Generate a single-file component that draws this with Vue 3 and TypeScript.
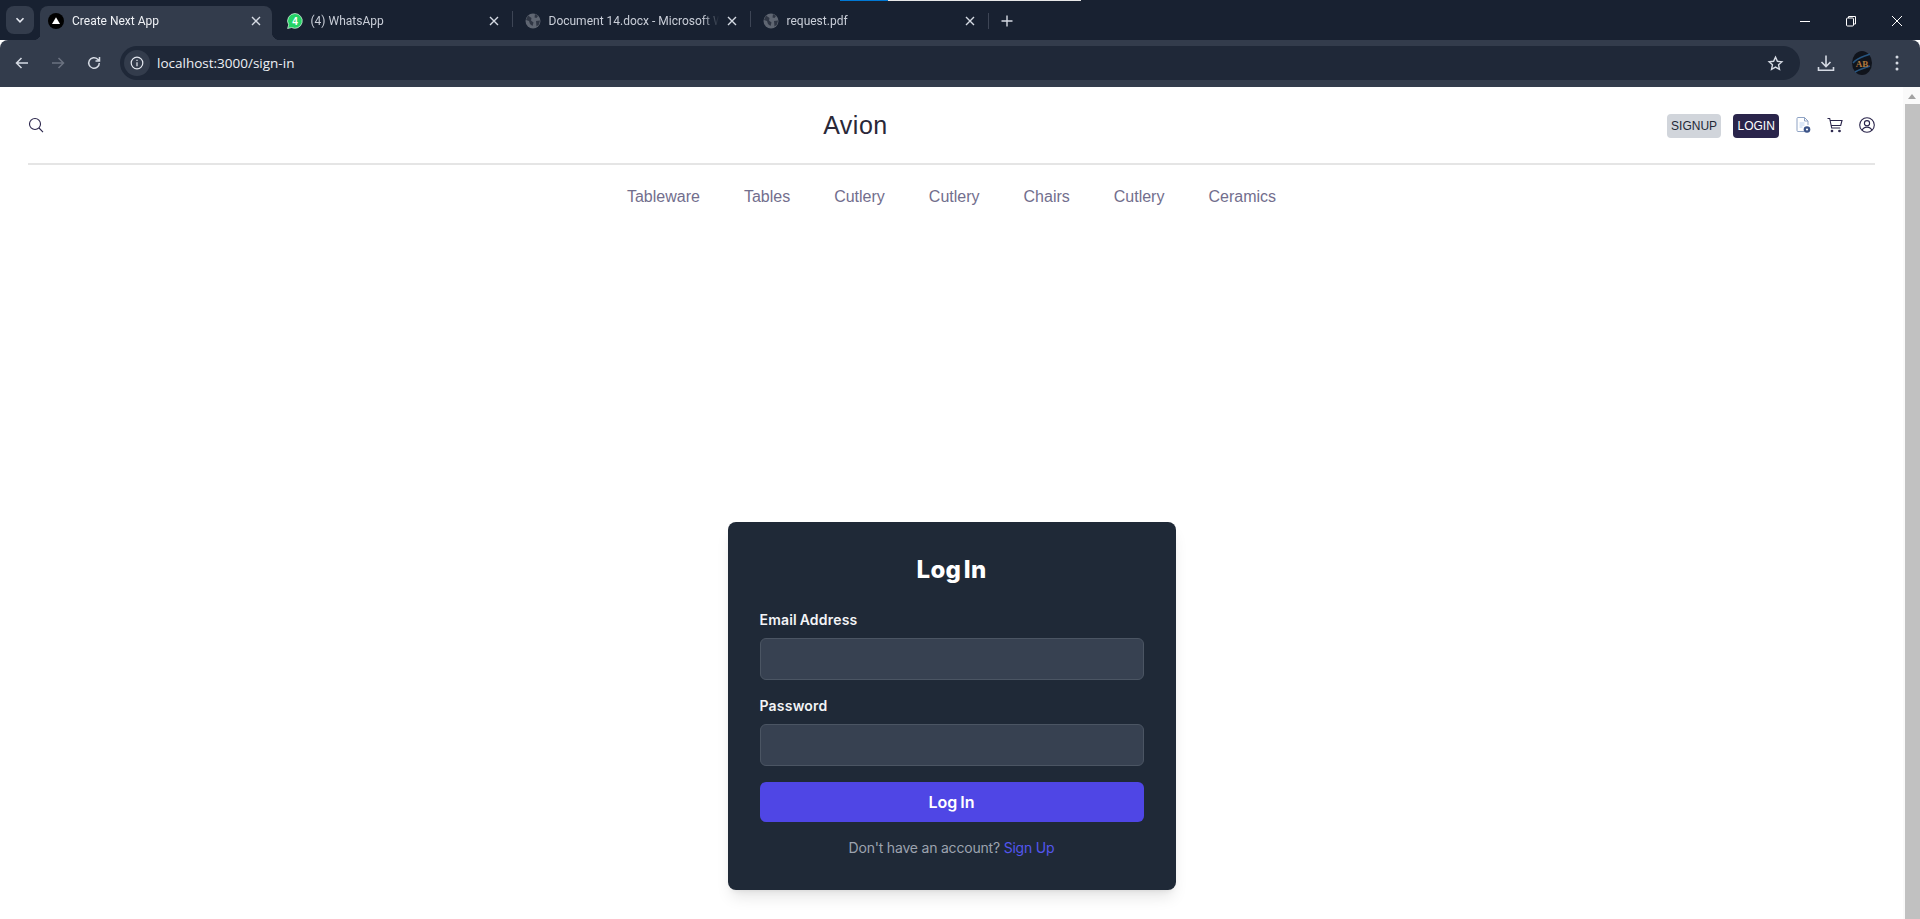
<template>
  <div class="screen">
    <!-- browser frame -->
    <div class="load-line">
      <span class="load-blue"></span>
      <span class="load-white"></span>
    </div>
    <div class="tabstrip">
      <div class="tab-menu">
        <svg width="12" height="12" viewBox="0 0 12 12" fill="none" stroke="#e4e8f0" stroke-width="1.6"><path d="M2.5 4.2 6 7.8l3.5-3.6" /></svg>
      </div>
      <div v-for="(tab, i) in tabs" :key="tab.title" class="tab" :class="{ active: i === 0 }">
        <svg v-if="tab.icon === 'next'" class="favicon" viewBox="0 0 16 16">
          <circle cx="8" cy="8" r="8" fill="#000" />
          <path d="M8 4.2 12 11H4z" fill="#fff" />
        </svg>
        <svg v-else-if="tab.icon === 'wa'" class="favicon" viewBox="0 0 16 16">
          <path d="M8 .5a7.400 7.400 0 0 0-6.300 11.300L.6 15.500l3.900-1A7.400 7.400 0 1 0 8 .5z" fill="#25d366" stroke="#e8f5ec" stroke-width=".7" />
          <text x="8" y="11.600" text-anchor="middle" class="wa-num">4</text>
        </svg>
        <svg v-else class="favicon" viewBox="0 0 16 16">
          <circle cx="8" cy="8" r="7.500" fill="#5f6672" />
          <path d="M3 2.500 6.500 5 6 7.500 8.500 9.500 7.500 13 5 11 4 8 1 7zM10 1l3 2-1.500 2-2-.5zM11 8l4-.5-1 4-2.500 2z" fill="#2f3644" />
        </svg>
        <span class="tab-title">{{ tab.title }}</span>
        <svg class="tab-close" width="10" height="10" viewBox="0 0 10 10" stroke="#d5dae3" stroke-width="1.400"><path d="M1 1l8 8M9 1l-8 8" /></svg>
      </div>
      <div class="new-tab">
        <svg width="12" height="12" viewBox="0 0 12 12" stroke="#d5dae3" stroke-width="1.400"><path d="M6 .5v11M.5 6h11" /></svg>
      </div>
      <div class="win-btns">
        <svg width="12" height="12" viewBox="0 0 12 12" stroke="#fff"><path d="M1 6.500h10" /></svg>
        <svg width="12" height="12" viewBox="0 0 12 12" stroke="#fff" fill="none"><rect x="1.500" y="3" width="7" height="8" rx="1" /><path d="M3.500 3V1.500h7v7.500H8.500" /></svg>
        <svg width="12" height="12" viewBox="0 0 12 12" stroke="#fff"><path d="M1 1l10 10M11 1 1 11" /></svg>
      </div>
    </div>
    <div class="toolbar">
      <svg class="nav-btn" viewBox="0 0 16 16" fill="none" stroke="#d5dae3" stroke-width="1.500"><path d="M14 8H2.500M7.500 3 2.500 8l5 5" /></svg>
      <svg class="nav-btn" viewBox="0 0 16 16" fill="none" stroke="#6b7280" stroke-width="1.500"><path d="M2 8h11.500M8.500 3l5 5-5 5" /></svg>
      <svg class="nav-btn" viewBox="0 0 16 16" fill="none" stroke="#d5dae3" stroke-width="1.500"><path d="M13.300 8a5.300 5.300 0 1 1-1.600-3.800L13.500 6M13.500 2v4h-4" /></svg>
      <div class="omnibox">
        <span class="site-chip">
          <svg width="14" height="14" viewBox="0 0 14 14" fill="none" stroke="#e4e8f0" stroke-width="1.200"><circle cx="7" cy="7" r="5.800" /><path d="M7 6.200v4M7 3.800v1.200" /></svg>
        </span>
        <span class="url">localhost:3000/sign-in</span>
        <svg class="star" width="17" height="17" viewBox="0 0 24 24" fill="none" stroke="#d5dae3" stroke-width="2"><path d="m12 3 2.700 5.900 6.300.7-4.700 4.300 1.300 6.300L12 17.100l-5.600 3.100 1.300-6.300L3 9.600l6.300-.7z" /></svg>
      </div>
      <svg class="download" width="18" height="18" viewBox="0 0 18 18" fill="none" stroke="#d5dae3" stroke-width="1.600"><path d="M9 1.500v10.500M4.500 8 9 12.500 13.500 8M1.500 13v3.200h15V13" /></svg>
      <svg class="avatar" width="20" height="24" viewBox="0 0 20 24">
        <ellipse cx="10" cy="12" rx="10" ry="12" fill="#10141c" />
        <path d="M1 12C6 6 11 6 18 3M3 21c5-3 10-4 15-6" stroke="#27557f" stroke-width="1.500" fill="none" />
        <text x="10" y="16" text-anchor="middle" class="avatar-text">AB</text>
      </svg>
      <svg class="dots" width="4" height="18" viewBox="0 0 4 18" fill="#d5dae3"><circle cx="2" cy="3" r="1.500" /><circle cx="2" cy="9" r="1.500" /><circle cx="2" cy="15" r="1.500" /></svg>
    </div>

    <!-- page -->
    <div class="viewport">
      <div class="page">
        <header class="header">
          <svg class="icon" viewBox="0 0 16 16" fill="none" stroke="#2a254b" stroke-width="1.100"><circle cx="7" cy="7" r="5.500" /><path d="m11 11 4 4.200" /></svg>
          <div class="logo">Avion</div>
          <div class="header-right">
            <button class="btn-signup">SIGNUP</button>
            <button class="btn-login">LOGIN</button>
            <svg class="icon" viewBox="0 0 16 16" fill="none">
              <path d="M9.500 .5 13 4v4M9.500 .5v3.500H13M9.500 .5H3Q2 .5 2 1.500v12q0 1 1 1h6" stroke="#8fa3c4" />
              <path d="M4.500 6h5M4.500 8h5M4.500 10h3" stroke="#b8d0f0" />
              <circle cx="12" cy="12.500" r="3.300" fill="#3c5488" />
              <circle cx="12" cy="12.500" r="1.100" fill="#fff" />
            </svg>
            <svg class="icon" viewBox="0 0 16 16" fill="none" stroke="#2a254b" stroke-width="1.100">
              <path d="M.5 1.500h2.200l2 9.500h8.500M3.200 3.500h11.800l-1.300 5H4.200" />
              <circle cx="5" cy="14" r=".8" fill="#2a254b" />
              <circle cx="12.500" cy="14" r=".8" fill="#2a254b" />
            </svg>
            <svg class="icon" viewBox="0 0 16 16" fill="none" stroke="#2a254b" stroke-width="1.100">
              <circle cx="8" cy="8" r="7.300" />
              <circle cx="8" cy="6.200" r="2.600" />
              <path d="M3.200 13.300c.8-2.200 2.700-3.200 4.800-3.200s4 1 4.800 3.200" />
            </svg>
          </div>
        </header>
        <div class="rule"></div>
        <nav class="nav">
          <a v-for="(link, i) in links" :key="i" class="nav-link">{{ link }}</a>
        </nav>

        <main class="main">
          <form class="card" @submit.prevent>
            <h2 class="card-title">Log In</h2>
            <label class="field-label">Email Address</label>
            <input class="field" type="email" />
            <label class="field-label second">Password</label>
            <input class="field" type="password" />
            <button class="submit" type="submit">Log In</button>
            <p class="foot">Don't have an account? <a class="foot-link">Sign Up</a></p>
          </form>
        </main>
      </div>
      <div class="scrollbar">
        <div class="scroll-arrow"></div>
        <div class="scroll-thumb"></div>
      </div>
    </div>
  </div>
</template>

<script setup lang="ts">
const tabs = [
  { title: 'Create Next App', icon: 'next' },
  { title: '(4) WhatsApp', icon: 'wa' },
  { title: 'Document 14.docx - Microsoft Word Online', icon: 'globe' },
  { title: 'request.pdf', icon: 'globe' }
]
const links = ['Tableware', 'Tables', 'Cutlery', 'Cutlery', 'Chairs', 'Cutlery', 'Ceramics']
</script>

<style scoped>
.screen {
  width: 1920px;
  height: 919px;
  display: flex;
  flex-direction: column;
  overflow: hidden;
  background: #fff;
}
.load-line {
  height: 1px;
  background: #182131;
  display: flex;
  padding-left: 840px;
}
.load-blue {
  width: 48px;
  background: #0078d4;
}
.load-white {
  width: 193px;
  background: #e8e8e8;
}
.tabstrip {
  height: 39px;
  background: #182131;
  display: flex;
  align-items: flex-end;
  font-family: Roboto, sans-serif;
  font-size: 12px;
  padding-left: 6px;
  position: relative;
}
.tab-menu {
  width: 28px;
  height: 28px;
  margin: 0 2px 6px 0;
  background: #333c4c;
  border-radius: 8px;
  display: flex;
  align-items: center;
  justify-content: center;
}
.tab {
  width: 238px;
  height: 34px;
  padding: 0 12px 4px 11.500px;
  box-sizing: border-box;
  display: flex;
  align-items: center;
  color: #c9ced8;
  position: relative;
  border-left: 1px solid transparent;
}
.tab + .tab + .tab::before,
.tab + .tab + .tab + .tab::before {
  content: '';
  position: absolute;
  left: -1px;
  top: 5px;
  height: 16px;
  width: 1px;
  background: #3d4555;
}
.tab.active {
  width: 232px;
  margin: 0 2px 0 4px;
  padding-left: 7px;
  padding-right: 10px;
  background: #333c4c;
  border-radius: 8px 8px 0 0;
  color: #f0f2f6;
}
.tab.active::before,
.tab.active::after {
  content: '';
  position: absolute;
  bottom: 0;
  width: 8px;
  height: 8px;
}
.tab.active::before {
  left: -8px;
  background: radial-gradient(circle at 0 0, transparent 8px, #333c4c 8.500px);
}
.tab.active::after {
  right: -8px;
  background: radial-gradient(circle at 100% 0, transparent 8px, #333c4c 8.500px);
}
.favicon {
  width: 16px;
  height: 16px;
  flex: none;
}
.wa-num {
  font: 700 10px 'Liberation Sans', sans-serif;
  fill: #fff;
}
.avatar-text {
  font: 700 9px 'Liberation Serif', serif;
  fill: #b07a3c;
}
.tab-title {
  flex: 1;
  margin-left: 8px;
  overflow: hidden;
  white-space: nowrap;
  -webkit-mask-image: linear-gradient(90deg, #000 90%, transparent);
  mask-image: linear-gradient(90deg, #000 90%, transparent);
}
.tab-close {
  flex: none;
  margin: 0 1px 0 8px;
}
.new-tab {
  height: 16px;
  margin: 0 0 11px 0;
  padding-left: 12px;
  border-left: 1px solid #3d4555;
  display: flex;
  align-items: center;
}
.win-btns {
  margin-left: auto;
  height: 34px;
  display: flex;
  align-items: center;
  gap: 34px;
  padding: 0 17px 4px 0;
  box-sizing: border-box;
}
.toolbar {
  height: 47px;
  background: #333c4c;
  border-radius: 8px 8px 0 0;
  display: flex;
  align-items: center;
  padding: 0 0 1px 14px;
  box-sizing: border-box;
}
.nav-btn {
  width: 16px;
  height: 16px;
  margin-right: 20px;
  flex: none;
}
.omnibox {
  width: 1680px;
  height: 34px;
  margin-left: -2px;
  background: #1f2838;
  border-radius: 17px;
  display: flex;
  align-items: center;
  padding: 0 16px 0 4px;
  box-sizing: border-box;
  flex: none;
}
.site-chip {
  width: 26px;
  height: 26px;
  border-radius: 50%;
  background: #333c4c;
  display: flex;
  align-items: center;
  justify-content: center;
}
.url {
  margin-left: 7px;
  color: #eef0f4;
  font: 13.500px 'Open Sans', sans-serif;
}
.star {
  margin-left: auto;
}
.download {
  margin-left: 17px;
}
.avatar {
  margin-left: 17px;
}
.dots {
  margin-left: 23px;
}
.viewport {
  flex: 1;
  display: flex;
  min-height: 0;
}
.page {
  flex: 1;
  min-width: 0;
  font-family: 'Liberation Sans', sans-serif;
}
.header {
  height: 76px;
  padding: 0 28px;
  display: flex;
  align-items: center;
  justify-content: space-between;
}
.icon {
  width: 16px;
  height: 16px;
  flex: none;
}
.logo {
  font-size: 25px;
  letter-spacing: 0.5px;
  color: #2a2838;
}
.header-right {
  display: flex;
  align-items: center;
  gap: 16px;
}
.btn-signup,
.btn-login {
  height: 24px;
  margin-top: 2px;
  border: 0;
  border-radius: 4px;
  padding: 0 4.200px;
  font: 12px 'Liberation Sans', sans-serif;
}
.btn-signup {
  background: #d1d5db;
  color: #1f2937;
  margin-right: -4px;
}
.btn-login {
  background: #2a254b;
  color: #fff;
}
.rule {
  height: 2px;
  margin: 0 28px;
  background: #e5e5e5;
}
.nav {
  height: 64px;
  display: flex;
  align-items: center;
  justify-content: center;
  gap: 44px;
  font-size: 16px;
  color: #726e8d;
}
.main {
  display: flex;
  justify-content: center;
  padding-top: 293px;
}
.card {
  width: 448px;
  box-sizing: border-box;
  padding: 32px;
  background: #1f2937;
  border-radius: 8px;
  box-shadow: 0 10px 15px -3px rgba(0, 0, 0, 0.1), 0 4px 6px -4px rgba(0, 0, 0, 0.1);
  display: flex;
  flex-direction: column;
  font-family: Inter, sans-serif;
}
.card-title {
  margin: 0 0 24px;
  text-align: center;
  font-size: 24px;
  line-height: 32px;
  font-weight: 800;
  color: #fff;
  word-spacing: -3px;
  letter-spacing: 0.3px;
}
.field-label {
  font-size: 14px;
  line-height: 20px;
  font-weight: 600;
  color: #f3f4f6;
  margin-bottom: 8px;
  word-spacing: -1px;
  letter-spacing: 0.2px;
}
.field-label.second {
  margin-top: 16px;
}
.field {
  height: 42px;
  box-sizing: border-box;
  background: #374151;
  border: 1px solid #4b5563;
  border-radius: 6px;
  outline: none;
}
.submit {
  margin-top: 16px;
  height: 40px;
  border: 0;
  border-radius: 6px;
  background: #4f46e5;
  color: #fff;
  font: 600 16px Inter, sans-serif;
  word-spacing: -1px;
}
.foot {
  margin: 16px 0 0;
  text-align: center;
  font-size: 14px;
  line-height: 20px;
  letter-spacing: -0.2px;
  color: #9ca3af;
}
.foot-link {
  color: #5356ee;
}
.scrollbar {
  width: 17px;
  flex: none;
  background: #fafafa;
  display: flex;
  flex-direction: column;
  align-items: flex-end;
}
.scroll-arrow {
  width: 0;
  height: 0;
  margin: 7px 4px 5px 0;
  border-left: 4px solid transparent;
  border-right: 4px solid transparent;
  border-bottom: 5px solid #a3a3a3;
}
.scroll-thumb {
  flex: 1;
  width: 15px;
  background: #c1c1c1;
}
</style>

<style>
body {
  margin: 0;
  overflow: hidden;
}
</style>
